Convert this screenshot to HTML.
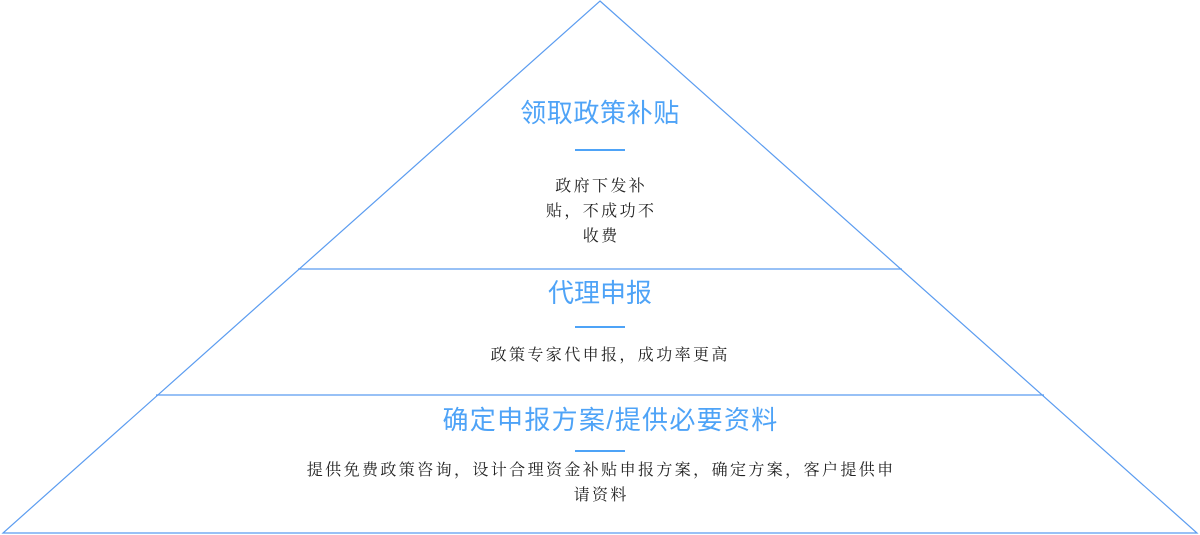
<!DOCTYPE html>
<html><head><meta charset="utf-8"><style>
body{margin:0;width:1200px;height:535px;background:#fff;position:relative;overflow:hidden}
.t{position:absolute;left:0;width:1200px;text-align:center;color:#4ea3f7;font:26px "Liberation Sans","Noto Sans CJK SC",sans-serif;line-height:30px}
.b{position:absolute;color:#222;font:16px "Liberation Serif","Noto Serif CJK SC",serif;line-height:25px;text-align:center;letter-spacing:2.4px;padding-left:2.4px;box-sizing:border-box}
.u{position:absolute;height:2px;width:50px;background:#4ea3f7;left:575px}
</style></head><body>
<svg width="1200" height="535" style="position:absolute;left:0;top:0">
<g stroke="#5b9cf0" stroke-width="1.2" fill="none">
<polygon points="600,1 1197,533 3,533"/>
<line x1="298" y1="269" x2="902" y2="269"/>
<line x1="156" y1="395" x2="1044" y2="395"/>
</g></svg>
<div class="t" style="top:98px;letter-spacing:0.6px;padding-left:0;box-sizing:border-box">领取政策补贴</div>
<div class="u" style="top:149px"></div>
<div class="b" style="left:520px;width:160px;top:174px">政府下发补<br>贴，不成功不<br>收费</div>
<div class="t" style="top:278px">代理申报</div>
<div class="u" style="top:326px"></div>
<div class="b" style="left:309px;width:600px;top:343px">政策专家代申报，成功率更高</div>
<div class="t" style="top:405px;letter-spacing:1.3px;padding-left:21px;box-sizing:border-box">确定申报方案/提供必要资料</div>
<div class="u" style="top:450px"></div>
<div class="b" style="left:290px;width:620px;top:458px">提供免费政策咨询，设计合理资金补贴申报方案，确定方案，客户提供申<br>请资料</div>
</body></html>
